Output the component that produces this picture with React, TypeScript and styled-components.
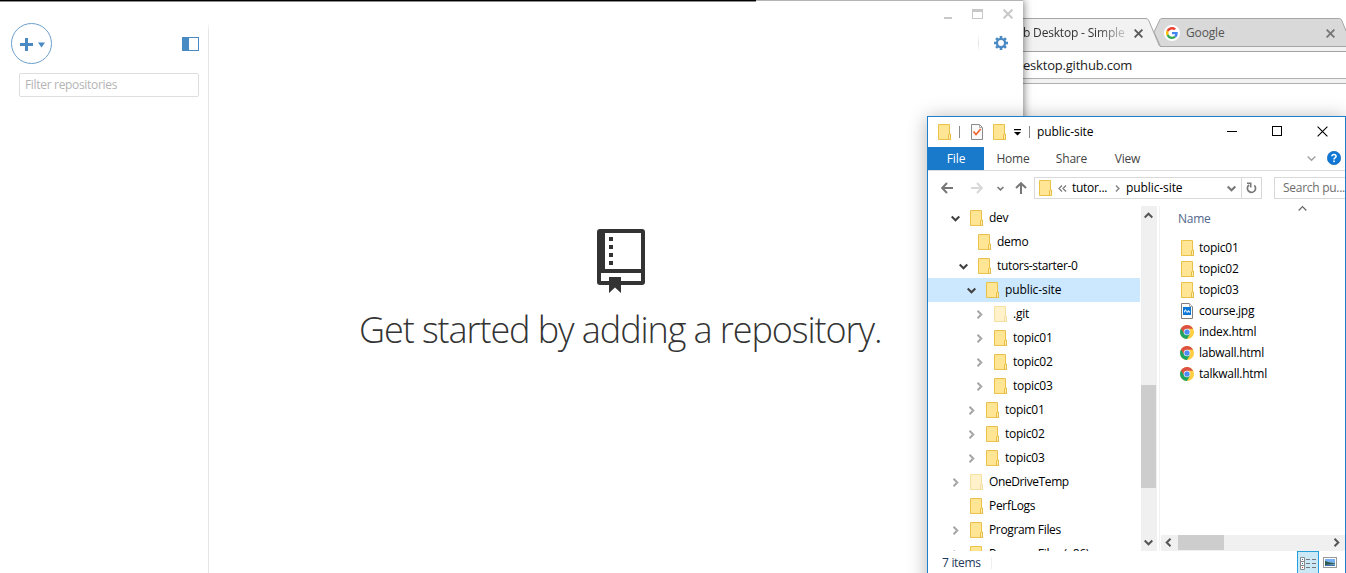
import React from "react";
import styled, { createGlobalStyle, css } from "styled-components";

const Global = createGlobalStyle`
  * { box-sizing: border-box; }
  html, body { margin: 0; padding: 0; background: #fff; overflow: hidden; }
  body { font-family: "Open Sans", "Noto Sans", "Liberation Sans", sans-serif; font-size: 12px; color: #000; }
  svg { display: block; flex: none; }
`;

const Desktop = styled.main`
  position: relative;
  width: 1346px;
  height: 573px;
  overflow: hidden;
  background: #fff;
`;

const Label = styled.span<{ $ls?: number; $color?: string; $size?: number }>`
  white-space: pre;
  line-height: 16px;
  font-size: ${(p) => p.$size ?? 12}px;
  letter-spacing: ${(p) => p.$ls ?? -0.25}px;
  color: ${(p) => p.$color ?? "inherit"};
`;

/* ---------- Browser ---------- */

const Browser = styled.section`
  position: absolute;
  left: 1023px;
  top: 0;
  width: 323px;
  height: 573px;
  display: flex;
  flex-direction: column;
  overflow: hidden;
  background: #fff;
`;

const TabStrip = styled.div`
  position: relative;
  flex: none;
  height: 51px;
  padding-top: 19px;
  display: flex;
  align-items: flex-start;
`;

const TabShapes = styled.svg`
  position: absolute;
  left: 0;
  top: 0;
`;

const Tab = styled.div<{ $width: number; $pad: number }>`
  position: relative;
  display: flex;
  align-items: center;
  height: 28px;
  width: ${(p) => p.$width}px;
  padding-left: ${(p) => p.$pad}px;
  padding-right: 10px;
`;

const TabTitle = styled.div<{ $fade?: boolean }>`
  flex: 1;
  display: flex;
  overflow: hidden;
  ${(p) =>
    p.$fade &&
    css`
      mask-image: linear-gradient(to right, #000 74px, rgba(0, 0, 0, 0.25) 101px);
    `}
`;

const GoogleBadge = styled.div`
  flex: none;
  display: flex;
  align-items: center;
  justify-content: center;
  width: 16px;
  height: 16px;
  margin-right: 6px;
  border-radius: 50%;
  background: #fff;
`;

const UrlBar = styled.div`
  flex: none;
  display: flex;
  align-items: center;
  height: 28px;
  border-top: 1px solid #a3a3a3;
  border-bottom: 1px solid #b0b0b0;
  padding-bottom: 1px;
  background: #fff;
`;

const UrlEdge = styled.div`
  flex: none;
  height: 5px;
  background: #f2f2f2;
  border-bottom: 1px solid #b0b0b0;
`;

const Cross = ({ size, color, w = 1.6 }: { size: number; color: string; w?: number }) => (
  <svg width={size} height={size} viewBox={`0 0 ${size} ${size}`} fill="none" stroke={color} strokeWidth={w}>
    <path d={`M.6 .6L${size - 0.6} ${size - 0.6}M${size - 0.6} .6L.6 ${size - 0.6}`} />
  </svg>
);

const GoogleMark = () => (
  <svg width="12" height="12" viewBox="0 0 48 48">
    <path fill="#EA4335" d="M24 9.5c3.5 0 6.700 1.200 9.200 3.600l6.900-6.900C35.900 2.400 30.500 0 24 0 14.600 0 6.500 5.400 2.600 13.200l8 6.200C12.400 13.700 17.700 9.500 24 9.500z" />
    <path fill="#4285F4" d="M47 24.600c0-1.600-.2-3.100-.4-4.600H24v9h12.900c-.6 3-2.200 5.500-4.700 7.200l7.700 6C44.400 38 47 31.800 47 24.600z" />
    <path fill="#FBBC05" d="M10.500 28.600c-.5-1.500-.8-3-.8-4.600s.3-3.100.8-4.600l-8-6.200C.9 16.500 0 20.100 0 24s.9 7.500 2.600 10.800l7.900-6.200z" />
    <path fill="#34A853" d="M24 48c6.500 0 11.900-2.100 15.900-5.800l-7.700-6c-2.200 1.500-4.900 2.300-8.200 2.300-6.300 0-11.600-4.200-13.500-9.900l-8 6.200C6.500 42.600 14.600 48 24 48z" />
  </svg>
);

/* ---------- GitHub Desktop ---------- */

const GitWindow = styled.section`
  position: absolute;
  left: 0;
  top: 0;
  width: 1023px;
  height: 600px;
  display: flex;
  background: #fff;
  box-shadow: 0 0 9px rgba(0, 0, 0, 0.6);
  border-top: 1px solid #b5b5b5;
`;

const TopEdge = styled.div`
  position: absolute;
  left: 0;
  top: -1px;
  width: 756px;
  height: 2px;
  background: linear-gradient(#000 50%, #8e8e8e 50%);
`;

const Sidebar = styled.aside`
  flex: none;
  width: 209px;
  padding: 22px 10px 0 10px;
  background: linear-gradient(to bottom, #fff, #e4e4e4 10px) right 0 top 21px / 1px 100% no-repeat;
`;

const SideTools = styled.div`
  display: flex;
  justify-content: space-between;
  align-items: center;
  height: 41px;
  padding-top: 1px;
`;

const AddButton = styled.button`
  display: flex;
  align-items: center;
  justify-content: center;
  gap: 5px;
  width: 41px;
  height: 41px;
  margin: -2px 0 0 0.5px;
  padding: 3px 0 0 2px;
  border: 1.5px solid #6d9fcd;
  border-radius: 50%;
  background: #fff;
`;

const Filter = styled.div`
  display: flex;
  align-items: center;
  width: 180px;
  height: 24px;
  margin: 9px 0 0 9px;
  padding-left: 5px;
  border: 1px solid #dedede;
  border-radius: 2px;
`;

const Body = styled.div`
  flex: 1;
  display: flex;
  flex-direction: column;
`;

const Caption = styled.div`
  display: flex;
  justify-content: flex-end;
  align-items: flex-end;
  height: 18px;
  padding-right: 10px;
`;

const CaptionIcons = styled.div`
  display: flex;
  align-items: flex-end;
  gap: 20px;
`;

const Settings = styled.div`
  display: flex;
  justify-content: flex-end;
  align-items: center;
  gap: 15px;
  height: 20px;
  margin-top: 14px;
  padding-right: 15px;
`;

const SettingsRule = styled.div`
  width: 1px;
  height: 18px;
  background: linear-gradient(#fff, #e2e2e2 50%, #fff);
`;

const Blank = styled.div`
  display: flex;
  flex-direction: column;
  align-items: flex-start;
  padding: 176px 0 0 150px;
`;

const BookWrap = styled.div`
  padding-left: 238px;
`;

const Headline = styled.h1`
  margin: 11px 0 0;
  font-family: "Open Sans", "Noto Sans", sans-serif;
  font-weight: 300;
  font-size: 36px;
  line-height: 52px;
  letter-spacing: -1.08px;
  white-space: pre;
  color: #333;
`;

const Gear = () => (
  <svg width="14" height="14" viewBox="0 0 14 14">
    <g fill="#4a8ac4">
      {[0, 45, 90, 135].map((a) => (
        <rect key={a} x="5.700" y="0" width="2.600" height="14" transform={`rotate(${a} 7 7)`} />
      ))}
      <circle cx="7" cy="7" r="5.200" />
    </g>
    <circle cx="7" cy="7" r="2.900" fill="#fff" />
  </svg>
);

const Book = () => (
  <svg width="48" height="64" viewBox="0 0 48 64" fill="#333">
    <path fillRule="evenodd" d="M3 0H45Q48 0 48 3V53Q48 56 45 56H24V64L18 58.500L12 64V56H3Q0 56 0 53V3Q0 0 3 0ZM8 4V40H44V4ZM4 44V52H12V48H24V52H44V44Z" />
    <path d="M12 8h4v4h-4zM12 16h4v4h-4zM12 24h4v4h-4zM12 32h4v4h-4z" />
  </svg>
);

/* ---------- Explorer ---------- */

const Explorer = styled.section`
  position: absolute;
  left: 927px;
  top: 116px;
  width: 419px;
  height: 480px;
  display: flex;
  flex-direction: column;
  overflow: hidden;
  background: #fff;
  border: 1px solid #1e80cd;
`;

const ExplorerShadow = styled.div`
  position: absolute;
  left: 927px;
  top: 116px;
  width: 419px;
  height: 480px;
  box-shadow: 0 2px 18px rgba(0, 0, 0, 0.3);
`;

const TitleBar = styled.header`
  flex: none;
  display: flex;
  align-items: center;
  height: 30px;
  padding: 0 17px 0 10px;
`;

const Spacer = styled.div<{ $w?: number }>`
  ${(p) => (p.$w ? `flex: none; width: ${p.$w}px;` : "flex: 1;")}
`;

const VRule = styled.div<{ $h?: number; $color?: string }>`
  flex: none;
  width: 1px;
  height: ${(p) => p.$h ?? 12}px;
  background: ${(p) => p.$color ?? "#8c8c8c"};
`;

const WinButtons = styled.div`
  display: flex;
  align-items: center;
  gap: 35px;
  padding-bottom: 2px;
`;

const Ribbon = styled.nav`
  flex: none;
  display: flex;
  align-items: center;
  height: 24px;
  padding-right: 4px;
  border-bottom: 1px solid #dadbdc;
`;

const HelpMark = styled.div`
  padding-bottom: 2px;
`;

const FileTab = styled.div`
  display: flex;
  align-items: center;
  justify-content: center;
  width: 56px;
  height: 23px;
  background: #1979ca;
  color: #fff;
`;

const RibbonTab = styled.div<{ $w: number }>`
  display: flex;
  justify-content: center;
  width: ${(p) => p.$w}px;
  color: #444;
`;

const AddressRow = styled.div`
  flex: none;
  display: flex;
  align-items: center;
  height: 35px;
  padding: 0 0 1px 12px;
`;

const AddressBox = styled.div`
  flex: none;
  display: flex;
  align-items: center;
  width: 228px;
  height: 22px;
  margin-left: 7px;
  padding: 0 4px 0 4px;
  border: 1px solid #d9d9d9;
`;

const SearchBox = styled.div`
  flex: none;
  display: flex;
  align-items: center;
  width: 90px;
  height: 22px;
  margin-left: 12px;
  padding-left: 8px;
  border: 1px solid #d9d9d9;
`;

const Panes = styled.div`
  flex: none;
  display: flex;
  height: 345px;
`;

const Tree = styled.ul`
  flex: none;
  width: 212px;
  height: 345px;
  margin: 0;
  padding: 0;
  overflow: hidden;
  list-style: none;
`;

const TreeRow = styled.li<{ $level: number; $selected?: boolean }>`
  display: flex;
  align-items: center;
  height: 24px;
  padding-left: ${(p) => 22 + p.$level * 8}px;
  background: ${(p) => (p.$selected ? "#cce8ff" : "transparent")};
`;

const Twisty = styled.div`
  display: flex;
  align-items: center;
  justify-content: center;
  width: 11px;
  margin-right: 9px;
`;

const VScroll = styled.div`
  flex: none;
  display: flex;
  flex-direction: column;
  align-items: center;
  width: 16px;
  margin-left: 1px;
  padding: 5px 1px 4px 0;
  background: #f0f0f0;
`;

const VThumb = styled.div`
  flex: none;
  width: 15px;
  height: 103px;
  margin: 165px 0 auto;
  background: #cdcdcd;
`;

const Files = styled.div`
  flex: 1;
  display: flex;
  flex-direction: column;
  margin-left: 2px;
  border-left: 1px solid #f2f2f2;
`;

const FilesHead = styled.div`
  flex: none;
  display: flex;
  align-items: center;
  gap: 87px;
  height: 31px;
  padding: 0 0 5px 18px;
`;

const SortMark = styled.div`
  padding-bottom: 21px;
`;

const FileRow = styled.div`
  flex: none;
  display: flex;
  align-items: center;
  height: 21px;
  padding-left: 20px;
`;

const FileIcon = styled.div`
  display: flex;
  justify-content: center;
  width: 14px;
  margin-right: 5px;
`;

const HScroll = styled.div`
  display: flex;
  align-items: center;
  height: 16px;
  margin: auto 0 0 1px;
  padding: 0 4px 1px 3px;
  background: #f0f0f0;
`;

const HThumb = styled.div`
  width: 46px;
  height: 15px;
  margin: 0 auto 0 5px;
  background: #cdcdcd;
`;

const StatusBar = styled.footer`
  flex: none;
  display: flex;
  align-items: center;
  height: 24px;
  padding: 0 8px 0 14px;
`;

const ViewButton = styled.div`
  display: flex;
  align-items: center;
  justify-content: center;
  width: 22px;
  height: 24px;
  margin-right: 4px;
  border: 1px solid #26a0da;
  background: #cbe8f6;
`;

const PreviewMark = styled.div`
  padding-bottom: 2px;
`;

const Folder = ({ faded }: { faded?: boolean }) => (
  <svg width="13" height="16" viewBox="0 0 13 16" opacity={faded ? 0.5 : 1}>
    <path d="M.5 .5H11.500V10.500H12.500V15.500H.5Z" fill="#ffe594" stroke="#eac24a" />
    <path d="M10.500 15V11L11.500 10H12.500V15.500H10.500Z" fill="#ffeeb0" stroke="#e6bd42" />
  </svg>
);

const Chevron = ({ dir, size = 9, color, w = 2 }: { dir: "up" | "down" | "left" | "right"; size?: number; color: string; w?: number }) => {
  const turn = { down: 0, left: 90, up: 180, right: 270 }[dir];
  return (
    <svg width={size} height={size} viewBox="0 0 9 9" fill="none" stroke={color} strokeWidth={w}>
      <path d="M.7 2.500L4.500 6.300L8.300 2.500" transform={`rotate(${turn} 4.500 4.500)`} />
    </svg>
  );
};

const Arrow = ({ dir, color }: { dir: "left" | "right" | "up"; color: string }) => {
  const turn = { left: 0, up: 90, right: 180 }[dir];
  return (
    <svg width="12" height="12" viewBox="0 0 12 12" fill="none" stroke={color} strokeWidth="2">
      <path d="M12 6H1.300M6 1L1.200 6L6 11" transform={`rotate(${turn} 6 6)`} />
    </svg>
  );
};

const ChromeMark = () => (
  <svg width="14" height="14" viewBox="0 0 14 14">
    <circle cx="7" cy="7" r="7" fill="#ffcd40" />
    <path d="M7 7L.94 3.500A7 7 0 0 0 7 14L10 8.800Z" fill="#1da462" />
    <path d="M.94 3.500A7 7 0 0 1 13.060 3.700H7L4.100 8.500Z" fill="#dd5144" />
    <circle cx="7" cy="7" r="3.300" fill="#f1f1f1" />
    <circle cx="7" cy="7" r="2.600" fill="#4c8bf5" />
  </svg>
);

const ImageFile = () => (
  <svg width="12" height="16" viewBox="0 0 12 16">
    <path d="M.5 .5H8.500L11.500 3.500V15.500H.5Z" fill="#fff" stroke="#7f7f7f" />
    <path d="M8.500 .5V3.500H11.500" fill="#eee" stroke="#aaa" />
    <rect x="2" y="4" width="8" height="8" fill="#0b76d6" />
    <path d="M3 10V8L4.500 6L6 8.500L7.500 7L9 8.500V10L7.500 9L6 10L4.500 8Z" fill="#d7ecff" />
  </svg>
);

const CheckFile = () => (
  <svg width="12" height="16" viewBox="0 0 12 16">
    <path d="M.5 .5H8.500L11.500 3.500V15.500H.5Z" fill="#fafafa" stroke="#8a8a8a" />
    <path d="M8.500 .5V3.500H11.500" fill="none" stroke="#aaa" />
    <path d="M2.500 7.500L5 10.500L9.700 5" fill="none" stroke="#f0642d" strokeWidth="1.700" />
  </svg>
);

const Refresh = () => (
  <svg width="11" height="12" viewBox="0 0 11 12" fill="none" stroke="#777" strokeWidth="1.700">
    <path d="M8.300 3.300A4.100 4.100 0 1 1 3 3" />
    <path d="M1 1.300H4.700V5.500" strokeWidth="1.600" />
  </svg>
);

type Node = { name: string; level: number; state?: "open" | "closed"; faded?: boolean; selected?: boolean; ls?: number };

const nodes: Node[] = [
  { name: "dev", level: 0, state: "open" },
  { name: "demo", level: 1 },
  { name: "tutors-starter-0", level: 1, state: "open", ls: -0.33 },
  { name: "public-site", level: 2, state: "open", selected: true, ls: -0.1 },
  { name: ".git", level: 3, state: "closed", faded: true },
  { name: "topic01", level: 3, state: "closed" },
  { name: "topic02", level: 3, state: "closed" },
  { name: "topic03", level: 3, state: "closed" },
  { name: "topic01", level: 2, state: "closed" },
  { name: "topic02", level: 2, state: "closed" },
  { name: "topic03", level: 2, state: "closed" },
  { name: "OneDriveTemp", level: 0, state: "closed", faded: true, ls: -0.4 },
  { name: "PerfLogs", level: 0, ls: -0.3 },
  { name: "Program Files", level: 0, state: "closed", ls: -0.35 },
  { name: "Program Files (x86)", level: 0, state: "closed", ls: -0.35 },
];

const files: { name: string; icon: React.ReactNode }[] = [
  { name: "topic01", icon: <Folder /> },
  { name: "topic02", icon: <Folder /> },
  { name: "topic03", icon: <Folder /> },
  { name: "course.jpg", icon: <ImageFile /> },
  { name: "index.html", icon: <ChromeMark /> },
  { name: "labwall.html", icon: <ChromeMark /> },
  { name: "talkwall.html", icon: <ChromeMark /> },
];

const BrowserWindow = () => (
  <Browser>
    <TabStrip>
      <TabShapes width="323" height="51" viewBox="0 0 323 51">
        <path d="M0 46.500H323V51H0Z" fill="#f2f2f2" />
        <path d="M137 46.500L131 32L137.500 18.500H316.500Q318 18.500 319 21L323 31V46.500Z" fill="#d9d9d9" />
        <path d="M323 46.500H137.500L131 32L137 19.500Q137.500 18.500 139 18.500H316.500Q318 18.500 319 21L323 31" fill="none" stroke="#a6a6a6" />
        <path d="M0 18.500H123Q125 18.500 126 21L136 45Q136.500 46.500 138 46.500V51H0Z" fill="#f2f2f2" />
        <path d="M0 18.500H123Q125 18.500 126 21L136 45Q136.500 46.500 138 46.500" fill="none" stroke="#a6a6a6" />
      </TabShapes>
      <Tab $width={130} $pad={0}>
        <TabTitle $fade>
          <Label $ls={-0.18} $color="#333">b Desktop - Simple</Label>
        </TabTitle>
        <Cross size={9} color="#5a5a5a" w={1.9} />
      </Tab>
      <Tab $width={193} $pad={11}>
        <GoogleBadge>
          <GoogleMark />
        </GoogleBadge>
        <TabTitle>
          <Label $ls={-0.15} $color="#555">Google</Label>
        </TabTitle>
        <Cross size={9} color="#777" w={1.9} />
        <Spacer $w={1} />
      </Tab>
    </TabStrip>
    <UrlBar>
      <Label $size={13} $ls={-0.2} $color="#222">esktop.github.com</Label>
    </UrlBar>
    <UrlEdge />
  </Browser>
);

const GitHubDesktop = () => (
  <GitWindow>
    <TopEdge />
    <Sidebar>
      <SideTools>
        <AddButton aria-label="Add repository">
          <svg width="13" height="13" viewBox="0 0 13 13" fill="#4a8ac4">
            <path d="M5 0H8V5H13V8H8V13H5V8H0V5H5Z" />
          </svg>
          <svg width="7" height="6" viewBox="0 0 7 6" fill="#4a8ac4">
            <path d="M0 .5H7L3.500 5.500Z" />
          </svg>
        </AddButton>
        <svg width="17" height="14" viewBox="0 0 17 14">
          <rect x=".5" y=".5" width="16" height="13" fill="#fff" stroke="#4a8ac4" />
          <rect width="7" height="14" fill="#4a8ac4" />
        </svg>
      </SideTools>
      <Filter>
        <Label $ls={-0.32} $color="#b4b4b4">Filter repositories</Label>
      </Filter>
    </Sidebar>
    <Body>
      <Caption>
        <CaptionIcons>
          <svg width="8" height="2" viewBox="0 0 8 2"><path d="M0 0H8V2H0Z" fill="#c8c8c8" /></svg>
          <svg width="11" height="10" viewBox="0 0 11 10">
            <rect x=".5" y=".5" width="10" height="9" fill="#fff" stroke="#c8c8c8" />
            <rect width="11" height="3" fill="#c8c8c8" />
          </svg>
          <Cross size={10} color="#c8c8c8" w={2} />
        </CaptionIcons>
      </Caption>
      <Settings>
        <SettingsRule />
        <Gear />
      </Settings>
      <Blank>
        <BookWrap>
          <Book />
        </BookWrap>
        <Headline>Get started by adding a repository.</Headline>
      </Blank>
    </Body>
  </GitWindow>
);

const FileExplorer = () => (
  <Explorer>
    <TitleBar>
      <Folder />
      <Spacer $w={8} />
      <VRule />
      <Spacer $w={11} />
      <CheckFile />
      <Spacer $w={10} />
      <Folder />
      <Spacer $w={8} />
      <svg width="7" height="7" viewBox="0 0 7 7"><path d="M0 0H7V1.200H0ZM0 3H7L3.500 6.500Z" fill="#000" /></svg>
      <Spacer $w={8} />
      <VRule />
      <Spacer $w={7} />
      <Label $ls={-0.1}>public-site</Label>
      <Spacer />
      <WinButtons>
        <svg width="10" height="10" viewBox="0 0 10 10"><path d="M0 5H10V6H0Z" /></svg>
        <svg width="10" height="10" viewBox="0 0 10 10" fill="none" stroke="#000"><rect x=".5" y=".5" width="9" height="9" /></svg>
        <Cross size={11} color="#000" w={1.1} />
      </WinButtons>
    </TitleBar>
    <Ribbon>
      <FileTab><Label $ls={-0.1}>File</Label></FileTab>
      <RibbonTab $w={58}><Label $ls={-0.2}>Home</Label></RibbonTab>
      <RibbonTab $w={59}><Label $ls={-0.2}>Share</Label></RibbonTab>
      <RibbonTab $w={53}><Label $ls={-0.2}>View</Label></RibbonTab>
      <Spacer />
      <Chevron dir="down" color="#a0a0a0" w={1.4} />
      <Spacer $w={11} />
      <HelpMark>
        <svg width="14" height="14" viewBox="0 0 14 14">
          <circle cx="7" cy="7" r="6.700" fill="#0f78d7" stroke="#0b5cad" strokeWidth=".6" />
          <path d="M4.900 5.200Q5 3.400 7 3.400T9.100 5.200Q9.100 6.200 8 6.800T7 8.500" fill="none" stroke="#fff" strokeWidth="1.500" />
          <rect x="6.200" y="9.500" width="1.600" height="1.600" fill="#fff" />
        </svg>
      </HelpMark>
    </Ribbon>
    <AddressRow>
      <Spacer $w={1} />
      <Arrow dir="left" color="#777" />
      <Spacer $w={18} />
      <Arrow dir="right" color="#d8d8d8" />
      <Spacer $w={14} />
      <Chevron dir="down" size={7} color="#777" />
      <Spacer $w={11} />
      <Arrow dir="up" color="#777" />
      <AddressBox>
        <Folder />
        <Spacer $w={6} />
        <svg width="9" height="7" viewBox="0 0 9 7" fill="none" stroke="#777" strokeWidth="1.200"><path d="M4 .5L1 3.500L4 6.500M8 .5L5 3.500L8 6.500" /></svg>
        <Spacer $w={5} />
        <Label $ls={-0.3}>tutor...</Label>
        <Spacer $w={7} />
        <Chevron dir="right" size={7} color="#888" />
        <Spacer $w={5} />
        <Label $ls={-0.1}>public-site</Label>
        <Spacer />
        <Chevron dir="down" color="#777" />
        <Spacer $w={5} />
        <VRule $h={20} $color="#d9d9d9" />
        <Spacer $w={4} />
        <Refresh />
      </AddressBox>
      <SearchBox><Label $ls={-0.28} $color="#6d6d6d">Search pu...</Label></SearchBox>
    </AddressRow>
    <Panes>
      <Tree>
        {nodes.map((n, i) => (
          <TreeRow key={i} $level={n.level} $selected={n.selected}>
            <Twisty>
              {n.state && <Chevron dir={n.state === "open" ? "down" : "right"} color={n.state === "open" ? "#404040" : "#a6a6a6"} />}
            </Twisty>
            <Folder faded={n.faded} />
            <Spacer $w={6} />
            <Label $ls={n.ls}>{n.name}</Label>
          </TreeRow>
        ))}
      </Tree>
      <VScroll>
        <Chevron dir="up" color="#555" />
        <VThumb />
        <Chevron dir="down" color="#555" />
      </VScroll>
      <Files>
        <FilesHead>
          <Label $color="#52678c">Name</Label>
          <SortMark><Chevron dir="up" color="#666" w={1.2} /></SortMark>
        </FilesHead>
        {files.map((f) => (
          <FileRow key={f.name}>
            <FileIcon>{f.icon}</FileIcon>
            <Label>{f.name}</Label>
          </FileRow>
        ))}
        <HScroll>
          <Chevron dir="left" color="#555" />
          <HThumb />
          <Chevron dir="right" color="#555" />
        </HScroll>
      </Files>
    </Panes>
    <StatusBar>
      <Label $color="#1e395b" $ls={-0.3}>7 items</Label>
      <Spacer $w={10} />
      <VRule $color="#f0f0f0" />
      <Spacer />
      <ViewButton>
        <svg width="16" height="13" viewBox="0 0 16 13" fill="none" stroke="#8a8a8a">
          <path d="M.5 .5H4.500V12.500H.5ZM.5 4.500H4.500M.5 8.500H4.500" fill="#fff" />
          <path d="M6 2.500H10M12 2.500H16M6 6.500H10M12 6.500H16M6 10.500H10M12 10.500H16" stroke="#777" />
          <path d="M2 2.500H3M2 6.500H3" stroke="#367ab0" />
          <path d="M2 10.500H3" stroke="#c33" />
        </svg>
      </ViewButton>
      <PreviewMark>
        <svg width="14" height="11" viewBox="0 0 14 11">
          <rect x=".5" y=".5" width="13" height="10" fill="#fff" stroke="#999" />
          <rect x="2" y="2" width="10" height="3" fill="#78aef5" />
          <rect x="2" y="5" width="10" height="4" fill="#7fb0d8" />
          <path d="M2 4L7 5.500L12 6.500V7L2 8Z" fill="#2d5a4c" />
          <rect x="2" y="8" width="10" height="1" fill="#3b6eb0" />
        </svg>
      </PreviewMark>
    </StatusBar>
  </Explorer>
);

export default function App() {
  return (
    <>
      <Global />
      <Desktop>
        <BrowserWindow />
        <GitHubDesktop />
        <ExplorerShadow />
        <FileExplorer />
      </Desktop>
    </>
  );
}
